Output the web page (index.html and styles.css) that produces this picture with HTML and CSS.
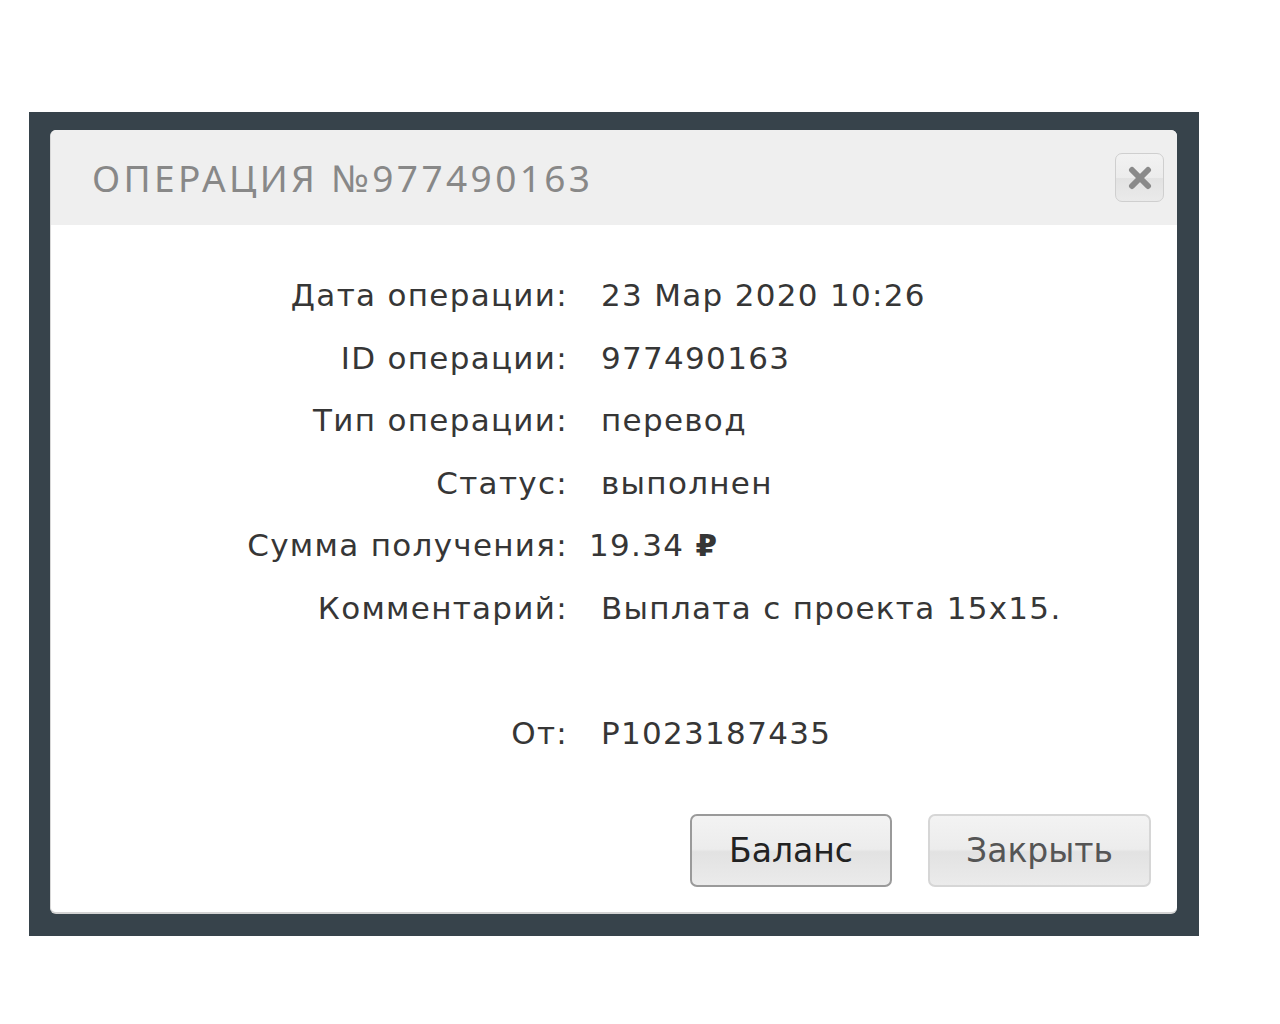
FILE: index.html
```html
<!DOCTYPE html>
<html lang="ru">
<head>
    <meta charset="UTF-8">
    <meta name="viewport" content="width=device-width, initial-scale=1.0">
    <title>Операция №977490163</title>
    <link rel="stylesheet" href="styles.css">
</head>
<body>
<div class="overlay">
    <div class="modal">
        <div class="modal-header">
            <h1>Операция №977490163</h1>
            <button class="close-btn" title="Закрыть">
                <svg width="24" height="24" viewBox="0 0 24 24">
                    <path d="M4 4 L20 20 M20 4 L4 20" stroke="#8a8a8a" stroke-width="6" stroke-linecap="round"/>
                </svg>
            </button>
        </div>
        <div class="modal-body">
            <div class="row"><span class="label">Дата операции:</span><span class="value">23 Мар 2020 10:26</span></div>
            <div class="row"><span class="label">ID операции:</span><span class="value">977490163</span></div>
            <div class="row"><span class="label">Тип операции:</span><span class="value">перевод</span></div>
            <div class="row"><span class="label">Статус:</span><span class="value">выполнен</span></div>
            <div class="row"><span class="label">Сумма получения:</span><span class="value sum">19.34 <b>₽</b></span></div>
            <div class="row"><span class="label">Комментарий:</span><span class="value">Выплата с проекта 15x15.</span></div>
            <div class="row spacer"></div>
            <div class="row"><span class="label">От:</span><span class="value">P1023187435</span></div>
        </div>
        <div class="modal-footer">
            <button class="btn btn-primary">Баланс</button>
            <button class="btn">Закрыть</button>
        </div>
    </div>
</div>
</body>
</html>
```

FILE: styles.css
```css
body {
    margin: 0;
    background-color: #ffffff;
    font-family: "Open Sans", Arial, sans-serif;
}
.overlay {
    margin: 112px 0 0 29px;
    width: 1170px;
    height: 824px;
    box-sizing: border-box;
    padding: 18px 22px 0 21px;
    background-color: #37434b;
}
.modal {
    height: 784px;
    box-sizing: border-box;
    background-color: #fff;
    border-radius: 6px;
    border-bottom: 2px solid #d3d3d3;
    border-left: 1px solid #d8d8d8;
    overflow: hidden;
    display: flex;
    flex-direction: column;
}
.modal-header {
    height: 95px;
    background-color: #efefef;
    display: flex;
    align-items: center;
    justify-content: space-between;
    padding: 0 13px 0 41px;
}
.modal-header h1 {
    margin: 0;
    font-family: "Noto Sans", sans-serif;
    font-weight: normal;
    font-size: 37px;
    letter-spacing: 3.4px;
    text-transform: uppercase;
    color: #888;
}
.close-btn {
    width: 49px;
    height: 49px;
    padding: 0;
    border: 1px solid #cfcfcf;
    border-radius: 7px;
    background: linear-gradient(#f2f2f2 0%, #ececec 50%, #e2e2e2 51%, #eaeaea 100%);
    display: flex;
    align-items: center;
    justify-content: center;
    cursor: pointer;
}
.close-btn svg {
    filter: blur(0.6px);
}
.modal-body {
    padding-top: 39px;
    font-family: "DejaVu Sans", sans-serif;
    font-size: 31px;
    letter-spacing: 1.3px;
    color: #363636;
}
.row {
    display: flex;
    height: 62.5px;
    line-height: 62.5px;
}
.label {
    width: 517px;
    text-align: right;
    flex-shrink: 0;
}
.value {
    padding-left: 33px;
}
.value.sum {
    padding-left: 21px;
}
.value b {
    font-weight: bold;
}
.modal-footer {
    margin-top: auto;
    display: flex;
    justify-content: flex-end;
    gap: 36px;
    padding: 0 26px 25px 0;
}
.btn {
    height: 73px;
    padding: 0 36px;
    font-family: "DejaVu Sans", Verdana, sans-serif;
    font-size: 33px;
    color: #555;
    border: 2px solid #d6d6d6;
    border-radius: 7px;
    background: linear-gradient(#f3f3f3 0%, #ececec 48%, #e2e2e2 52%, #ebebeb 100%);
    cursor: pointer;
}
.btn-primary {
    color: #222;
    border-color: #9a9a9a;
    padding: 0 37px;
}
```
